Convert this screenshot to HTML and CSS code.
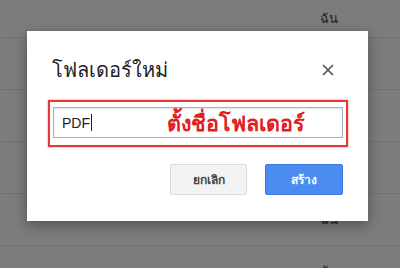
FILE: index.html
```html
<!DOCTYPE html>
<html lang="th">
<head>
<meta charset="utf-8">
<link rel="stylesheet" href="styles.css">
</head>
<body>
<div class="list">
  <div class="row first"><span class="owner">ฉัน</span></div>
  <div class="row"></div>
  <div class="row"></div>
  <div class="row"></div>
  <div class="row"><span class="owner">ฉัน</span></div>
  <div class="row"><span class="owner">ฉัน</span></div>
</div>
<div class="dialog">
  <div class="head">
    <div class="title">โฟลเดอร์ใหม่</div>
    <svg class="close" width="12" height="12" viewBox="0 0 12 12"><path d="M1 1L11 11M11 1L1 11" stroke="#555" stroke-width="1.7"/></svg>
  </div>
  <div class="highlight">
    <div class="input"><span class="value">PDF</span><span class="caret"></span><span class="hint">ตั้งชื่อโฟลเดอร์</span></div>
  </div>
  <div class="actions">
    <div class="btn cancel">ยกเลิก</div>
    <div class="btn create">สร้าง</div>
  </div>
</div>
</body>
</html>
```
FILE: styles.css
```css
html, body { margin: 0; padding: 0; }
body {
  width: 400px; height: 268px; overflow: hidden;
  background: #7c7c7c;
  font-family: "Liberation Sans", "Noto Sans", sans-serif;
  position: relative;
}
.list { display: flex; flex-direction: column; }
.row {
  height: 51px;
  border-bottom: 1px solid #727272;
  display: flex; align-items: center; justify-content: flex-end;
  padding-right: 62px;
}
.row.first { height: 37px; padding-top: 0; }
.owner { font-size: 13px; color: #222; }
.dialog {
  position: absolute; left: 27px; top: 31px;
  width: 341px; height: 190px; box-sizing: border-box;
  background: #fff;
  box-shadow: 0 4px 12px rgba(0,0,0,0.35);
  padding: 24px 25px 0 25px;
  display: flex; flex-direction: column;
}
.head { display: flex; justify-content: space-between; align-items: center; height: 30px; }
.title { font-size: 20px; color: #222; }
.close { margin-right: 9px; }
.highlight {
  margin-top: 15px; margin-left: -4px; margin-right: -5px;
  border: 2px solid #e23a3a;
  box-shadow: 0 0 2px rgba(226,58,58,0.6);
  padding: 5px 3px 7px 3px;
}
.input {
  height: 31px; box-sizing: border-box;
  border: 1px solid #9fb3bf;
  box-shadow: inset 0 1px 2px rgba(0,0,0,0.12);
  display: flex; align-items: center; padding-left: 8px;
}
.value { font-size: 14px; color: #222; }
.caret { width: 1px; height: 17px; background: #222; margin-left: 1px; }
.hint { margin-left: 75px; font-size: 21.5px; font-weight: bold; color: #e0201f; }
.actions { display: flex; justify-content: flex-end; gap: 18px; margin-top: 17px; }
.btn {
  width: 77px; height: 31px; box-sizing: border-box; border-radius: 2px;
  display: flex; align-items: center; justify-content: center;
  font-size: 12px; font-weight: bold;
}
.cancel { background: #f3f3f3; border: 1px solid #dcdcdc; color: #444; }
.create { width: 78px; background: #4a8cf0; border: 1px solid #3b78e0; color: #fff; }
```
